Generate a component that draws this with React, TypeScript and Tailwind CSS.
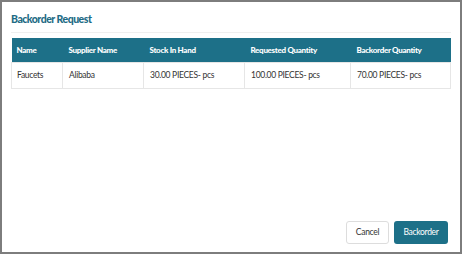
import React from "react";

const rows = [
  {
    name: "Faucets",
    supplier: "Alibaba",
    stock: "30.00 PIECES- pcs",
    requested: "100.00 PIECES- pcs",
    backorder: "70.00 PIECES- pcs",
  },
];

export default function App() {
  return (
    <div
      className="w-[462px] h-[254px] bg-white border-2 border-[#7d7d7d] flex flex-col"
      style={{ fontFamily: "Lato, 'Open Sans', sans-serif" }}
    >
      {/* Header */}
      <div className="px-[9px] pt-[10px]">
        <div className="pb-[6px] border-b border-[#efefef]">
          <h2 className="text-[10.5px] font-black tracking-[-0.5px] text-[#1e6b85] leading-[14px]">
            Backorder Request
          </h2>
        </div>
      </div>

      {/* Table */}
      <div className="px-[9px] pt-[5px]">
        <table className="w-full border-collapse text-[8px] tracking-[-0.3px]">
          <thead>
            <tr className="bg-[#1d7088] text-white h-[24px]">
              <th className="w-[51px] text-left font-black pl-[5px]">Name</th>
              <th className="w-[81px] text-left font-black pl-[6px]">Supplier Name</th>
              <th className="w-[101px] text-left font-black pl-[6px]">Stock In Hand</th>
              <th className="w-[106px] text-left font-black pl-[6px]">Requested Quantity</th>
              <th className="text-left font-black pl-[6px]">Backorder Quantity</th>
            </tr>
          </thead>
          <tbody>
            {rows.map((r) => (
              <tr key={r.name} className="h-[26px] text-[#333333] text-[8.5px]">
                <td className="border border-[#e6e6e6] pl-[5px]">{r.name}</td>
                <td className="border border-[#e6e6e6] pl-[6px]">{r.supplier}</td>
                <td className="border border-[#e6e6e6] pl-[6px]">{r.stock}</td>
                <td className="border border-[#e6e6e6] pl-[6px]">{r.requested}</td>
                <td className="border border-[#e6e6e6] pl-[6px]">{r.backorder}</td>
              </tr>
            ))}
          </tbody>
        </table>
      </div>

      {/* Footer */}
      <div className="mt-auto flex justify-end gap-[5px] pr-[12px] pb-[8px]">
        <button className="h-[23px] w-[43px] rounded-[3px] border border-[#dddddd] bg-white text-[8.5px] tracking-[-0.3px] text-[#333333]">
          Cancel
        </button>
        <button className="h-[23px] w-[54px] rounded-[3px] bg-[#1d7088] text-[8.5px] tracking-[-0.3px] text-white">
          Backorder
        </button>
      </div>
    </div>
  );
}
